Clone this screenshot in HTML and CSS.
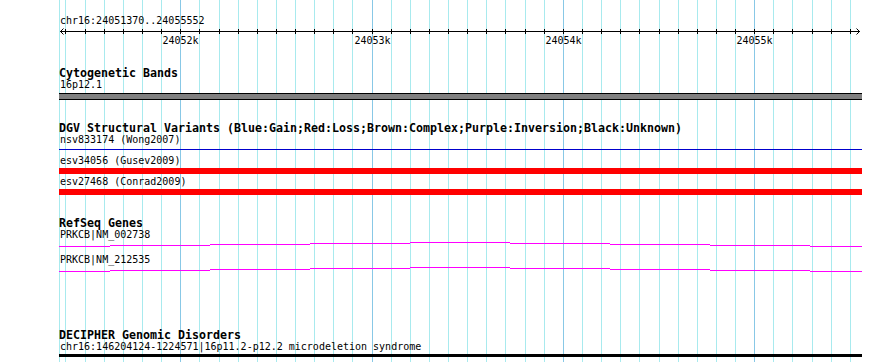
FILE: index.html
```html
<!DOCTYPE html>
<html lang="en">
<head>
<meta charset="UTF-8">
<meta name="viewport" content="width=device-width, initial-scale=1.0">
<title>chr16:24051370..24055552</title>
<link rel="stylesheet" href="styles.css">
</head>
<body>
<div class="panel">
  <svg class="grid" id="grid" width="890" height="362"></svg>

  <div class="tracks">
    <div class="lbl">chr16:24051370..24055552</div>
    <svg class="ruler" id="ruler" width="803" height="20"></svg>

    <div class="track cyto">
      <div class="ttl">Cytogenetic Bands</div>
      <div class="lbl">16p12.1</div>
      <div class="band"></div>
    </div>

    <div class="track dgv">
      <div class="ttl">DGV Structural Variants (Blue:Gain;Red:Loss;Brown:Complex;Purple:Inversion;Black:Unknown)</div>
      <div class="feat">
        <div class="lbl">nsv833174 (Wong2007)</div>
        <div class="sv gain"></div>
      </div>
      <div class="feat">
        <div class="lbl">esv34056 (Gusev2009)</div>
        <div class="sv loss"></div>
      </div>
      <div class="feat">
        <div class="lbl">esv27468 (Conrad2009)</div>
        <div class="sv loss"></div>
      </div>
    </div>

    <div class="track refseq">
      <div class="ttl">RefSeq Genes</div>
      <div class="feat">
        <div class="lbl">PRKCB|NM_002738</div>
        <svg class="gene" width="803" height="7"></svg>
      </div>
      <div class="feat">
        <div class="lbl">PRKCB|NM_212535</div>
        <svg class="gene" width="803" height="7"></svg>
      </div>
    </div>

    <div class="track decipher">
      <div class="ttl">DECIPHER Genomic Disorders</div>
      <div class="lbl">chr16:146204124-1224571|16p11.2-p12.2 microdeletion syndrome</div>
      <div class="region"></div>
    </div>
  </div>
</div>

<script>
// view: chr16:24051370..24055552, 803px wide starting at x=59
const start = 24051370, end = 24055552;
const x0 = 60.2, scale = 0.19133, left = 59;
const px = bp => Math.floor(x0 + (bp - start) * scale);

let grid = `<rect class="minor" x="${left}" y="0" width="1" height="362"/>`;
let ruler = `<rect x="1" y="4" width="800" height="1"/>` +
  `<polyline points="4.5,1.5 1.5,4.5 4.5,7.5"/>` +
  `<polyline points="797.5,1.5 800.5,4.5 797.5,7.5"/>`;

for (let bp = 24051400; bp < end; bp += 100) {
  const x = px(bp);
  const major = bp % 1000 === 0;
  grid += `<rect class="${major ? 'major' : 'minor'}" x="${x}" y="0" width="1" height="362"/>`;
  ruler += `<rect x="${x - left}" y="2" width="1" height="5"/>`;
  if (major) ruler += `<text x="${x - left + 0.5}" y="17">${bp / 1000}k</text>`;
}
document.getElementById('grid').innerHTML = grid;
document.getElementById('ruler').innerHTML = ruler;

// transcript line steps: [from x, to x, row]
const steps = [[59,110,5],[110,210,4],[210,310,3],[310,410,2],[410,510,1],
               [510,610,2],[610,710,3],[710,810,4],[810,862,5]];
document.querySelectorAll('.gene').forEach(svg => {
  svg.innerHTML = steps.map(s =>
    `<rect x="${s[0] - left}" y="${s[2]}" width="${s[1] - s[0]}" height="1"/>`).join('');
});
</script>
</body>
</html>
```

FILE: styles.css
```css
body { margin: 0; background: #fff; color: #000; }
.panel { position: relative; width: 890px; height: 362px; overflow: hidden; }
.grid { position: absolute; left: 0; top: 0; }
.grid .minor { fill: #a8eaee; }
.grid .major { fill: #88c8e6; }

.tracks { position: relative; margin-left: 59px; width: 803px; padding-top: 15px; }
.lbl { font: 10px/12px "DejaVu Sans Mono", monospace; height: 12px; padding-left: 1px; white-space: nowrap; }
.ttl { font: bold 11.63px/12px "DejaVu Sans Mono", monospace; height: 12px; white-space: nowrap; }

.ruler { display: block; }
.ruler rect { fill: #000; }
.ruler polyline { fill: none; stroke: #000; stroke-width: 1; }
.ruler text { font: 10px "DejaVu Sans Mono", monospace; text-anchor: middle; fill: #000; }

.cyto { margin-top: 20px; }
.dgv, .refseq { margin-top: 22px; }
.decipher { margin-top: 56px; }

.band { margin-top: 2px; height: 7px; box-sizing: border-box; background: #808080; border-top: 1px solid #000; border-bottom: 1px solid #000; }

.dgv .feat + .feat { margin-top: 5px; }
.dgv .feat:last-child { margin-top: 2px; }
.sv { margin-top: 1px; }
.sv.gain { margin-top: 3px; height: 1px; background: #0000cd; }
.sv.loss { height: 6px; background: #ff0000; }

.gene { display: block; }
.gene rect { fill: #ff00ff; }
.refseq .feat + .feat { margin-top: 6px; }

.region { margin-top: 1px; height: 3px; background: #000; }
```
